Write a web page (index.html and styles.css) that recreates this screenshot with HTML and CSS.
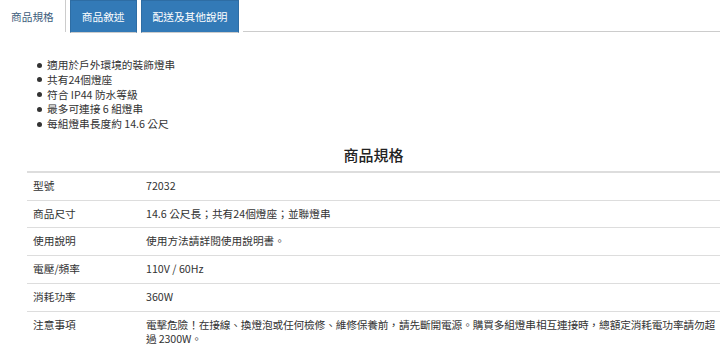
FILE: index.html
```html
<!DOCTYPE html>
<html lang="zh-Hant">
<head>
  <meta charset="UTF-8">
  <meta name="viewport" content="width=device-width, initial-scale=1.0">
  <title>商品規格</title>
  <link rel="stylesheet" href="styles.css">
</head>
<body>
  <div class="tabs">
    <div class="tab active">商品規格</div>
    <div class="tab">商品敘述</div>
    <div class="tab">配送及其他說明</div>
    <div class="tab-rest"></div>
  </div>

  <ul class="features">
    <li>適用於戶外環境的裝飾燈串</li>
    <li>共有24個燈座</li>
    <li>符合 IP44 防水等級</li>
    <li>最多可連接 6 組燈串</li>
    <li>每組燈串長度約 14.6 公尺</li>
  </ul>

  <div class="spec">
    <h2 class="spec-title">商品規格</h2>
    <table class="spec-table">
      <tr>
        <td class="label">型號</td>
        <td>72032</td>
      </tr>
      <tr>
        <td class="label">商品尺寸</td>
        <td>14.6 公尺長；共有24個燈座；並聯燈串</td>
      </tr>
      <tr>
        <td class="label">使用說明</td>
        <td>使用方法請詳閱使用說明書。</td>
      </tr>
      <tr>
        <td class="label">電壓/頻率</td>
        <td>110V / 60Hz</td>
      </tr>
      <tr>
        <td class="label">消耗功率</td>
        <td>360W</td>
      </tr>
      <tr>
        <td class="label">注意事項</td>
        <td class="note">電擊危險！在接線、換燈泡或任何檢修、維修保養前，請先斷開電源。購買多組燈串相互連接時，總額定消耗電功率請勿超過 2300W。</td>
      </tr>
    </table>
  </div>
</body>
</html>
```

FILE: styles.css
```css
body {
  font-family: "Noto Sans CJK TC", sans-serif;
  font-size: 10.7px;
  color: #333;
  background-color: #fff;
  margin: 0;
  padding: 0;
}

.tabs {
  display: flex;
  height: 32px;
}

.tab {
  display: flex;
  align-items: center;
  padding: 0 11px;
  height: 31px;
  background-color: #337ab7;
  border: 1px solid #2e6da4;
  border-bottom: 1px solid #ccc;
  color: #fff;
  margin-right: 4px;
}

.tab.active {
  background-color: #fff;
  color: #3d5d7c;
  border: none;
  border-right: 1px solid #ccc;
  height: 32px;
}

.tab-rest {
  flex: 1;
  border-bottom: 1px solid #ccc;
}

.features {
  list-style: none;
  margin: 26px 0 0 0;
  padding-left: 47px;
  line-height: 14.75px;
}

.features li::before {
  content: "";
  display: inline-block;
  width: 5px;
  height: 5px;
  border-radius: 50%;
  background-color: #333;
  margin-left: -10px;
  margin-right: 5px;
  vertical-align: middle;
  position: relative;
  top: -1px;
}

.spec {
  margin-left: 27px;
  width: 693px;
}

.spec-title {
  font-size: 15px;
  font-weight: 500;
  color: #222;
  text-align: center;
  line-height: 20px;
  margin: 13px 0 0 0;
  padding-bottom: 6px;
}

.spec-table {
  width: 100%;
  border-collapse: collapse;
  border-top: 2px solid #ddd;
}

.spec-table td {
  border-top: 1px solid #ddd;
  padding: 6.15px 0 6.15px 6px;
  line-height: 14.5px;
  vertical-align: top;
}

.spec-table tr:first-child td {
  border-top: none;
}

.spec-table .label {
  width: 107px;
}

.spec-table .note {
  letter-spacing: -0.15px;
}
```
